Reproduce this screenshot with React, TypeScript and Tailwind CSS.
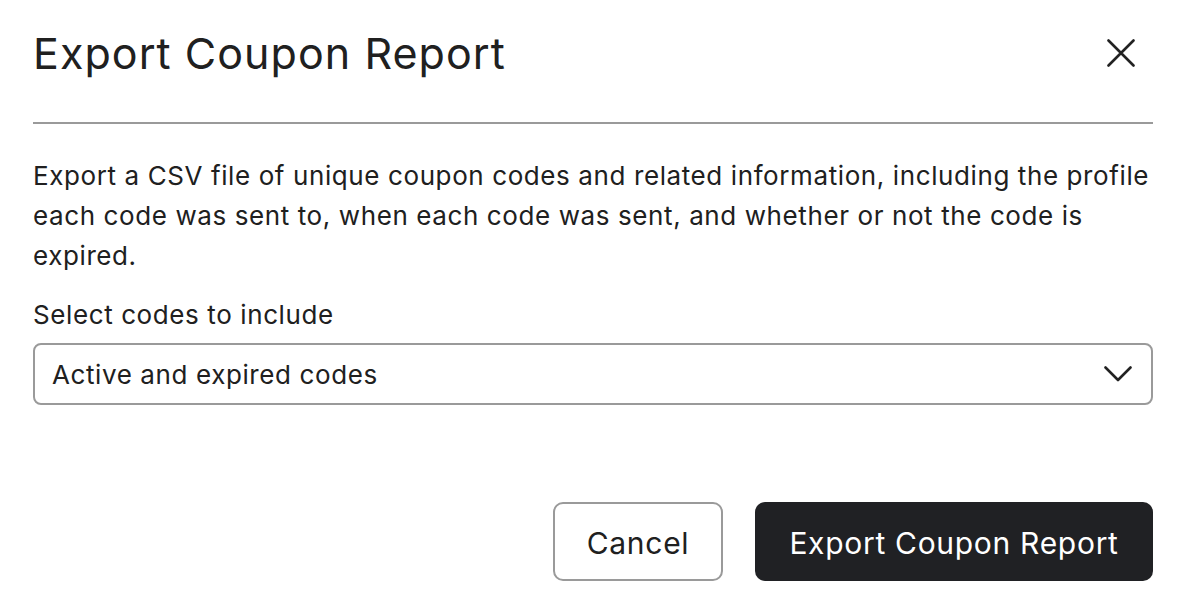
import React from "react";

export default function App() {
  return (
    <div className="w-[1190px] h-[614px] bg-white text-[#202020] pl-[33px] pr-[37px] overflow-hidden" style={{ fontFamily: "Inter, 'Noto Sans', sans-serif" }}>
      <div className="flex items-center justify-between h-[122px] pb-[20px] pt-[4px]">
        <h1 className="text-[43px] leading-[52px] font-normal tracking-[1.05px]">Export Coupon Report</h1>
        <button className="w-[40px] h-[40px] flex items-center justify-center mr-[12px]" aria-label="Close">
          <svg width="28" height="28" viewBox="0 0 28 28" fill="none" stroke="#222" strokeWidth="2.6" strokeLinecap="round">
            <path d="M1.5 1.5 L26.5 26.5 M26.5 1.5 L1.5 26.5" />
          </svg>
        </button>
      </div>
      <div className="h-[2px] bg-[#9a9a9a]" />
      <p className="mt-[32px] text-[26px] leading-[40px] tracking-[0.6px]">
        Export a CSV file of unique coupon codes and related information, including the profile each code was sent to, when each code was sent, and whether or not the code is expired.
      </p>
      <div className="mt-[19px] text-[26px] leading-[40px] tracking-[0.6px]">Select codes to include</div>
      <div className="mt-[8px] h-[62px] border-2 border-[#9a9a9a] rounded-[8px] flex items-center justify-between pl-[17px] pr-[19px]">
        <span className="text-[26px] tracking-[0.6px]">Active and expired codes</span>
        <svg width="28" height="16" viewBox="0 0 28 16" fill="none" stroke="#222" strokeWidth="2.6" strokeLinecap="round" strokeLinejoin="round">
          <path d="M1.5 1.5 L14 14 L26.5 1.5" />
        </svg>
      </div>
      <div className="mt-[97px] flex justify-end gap-[32px]">
        <button className="w-[170px] h-[79px] pt-[3px] border-2 border-[#9a9a9a] rounded-[10px] text-[30px] tracking-[0.7px] bg-white text-[#202020]">Cancel</button>
        <button className="w-[398px] h-[79px] pt-[3px] rounded-[10px] text-[30px] tracking-[0.7px] bg-[#202124] text-white">Export Coupon Report</button>
      </div>
    </div>
  );
}
